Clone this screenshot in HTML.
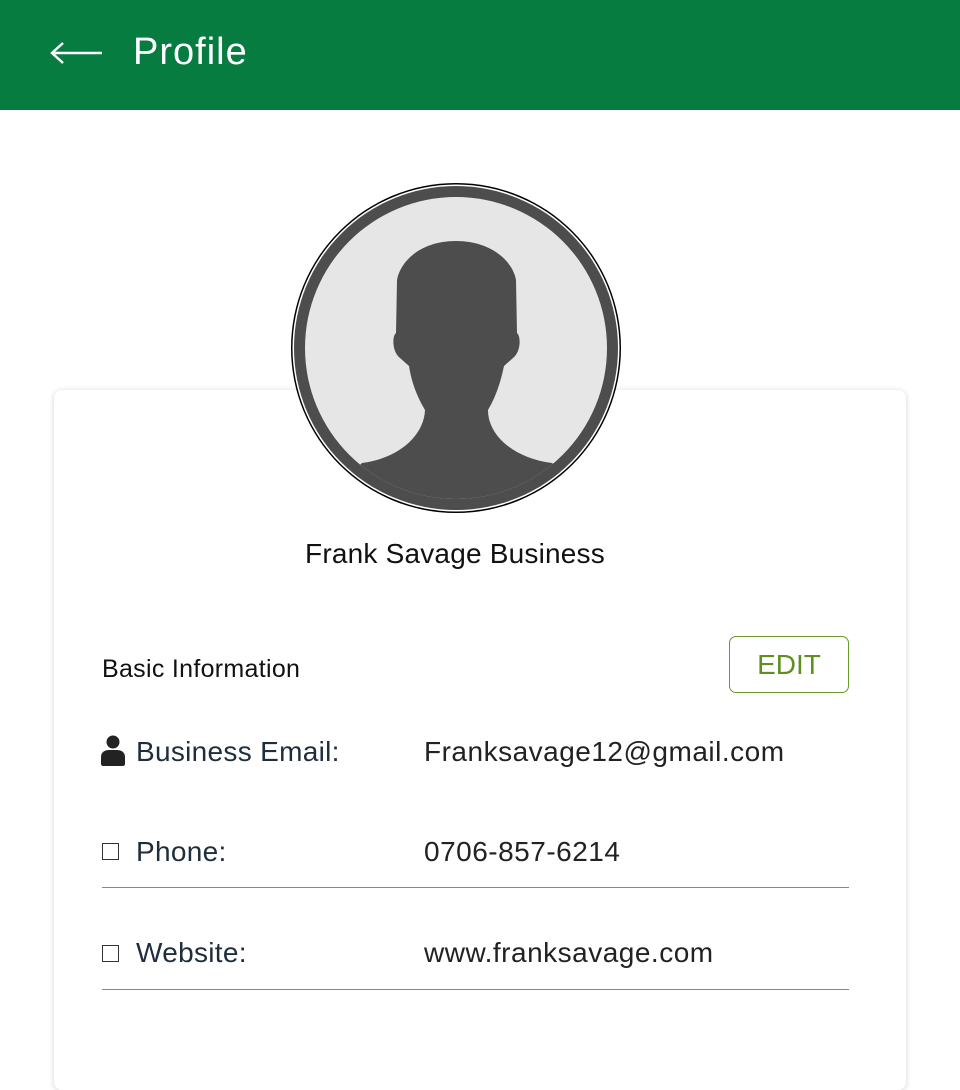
<!DOCTYPE html>
<html><head><meta charset="utf-8"><style>
*{margin:0;padding:0;box-sizing:border-box}
body{width:960px;height:1050px;overflow:hidden;background:#fff;font-family:"Liberation Sans",sans-serif;position:relative}
.hdr{position:absolute;left:0;top:0;width:960px;height:110px;background:#067c41}
.hdr .t{position:absolute;left:133px;top:31px;color:#fff;font-size:38px;letter-spacing:1px}
.card{position:absolute;left:54px;top:390px;width:852px;height:700px;background:#fff;border-radius:8px;box-shadow:0 1px 6px rgba(0,0,0,.18)}
.abs{position:absolute}
.name{left:0;width:910px;text-align:center;top:538px;font-size:28px;color:#111;letter-spacing:.2px}
.lbl{font-size:28px;color:#1f2d3d;letter-spacing:.3px}
.val{font-size:28px;color:#222;left:424px;letter-spacing:.5px}
.line{left:102px;width:747px;height:1px;background:#888}
.box{width:17px;height:17px;border:1.5px solid #333}
</style></head><body>
<div class="hdr">
<svg class="abs" style="left:48px;top:40px" width="58" height="26" viewBox="0 0 58 26"><path d="M54 13H4M15 3L4 13L15 23" stroke="#fff" stroke-width="2.5" fill="none"/></svg>
<div class="t">Profile</div>
</div>
<div class="card"></div>
<svg class="abs" style="left:289px;top:181px" width="334" height="334" viewBox="289 181 334 334">
<defs><clipPath id="c"><circle cx="456" cy="348" r="151"/></clipPath></defs>
<circle cx="456" cy="348" r="165" fill="#000"/>
<circle cx="456" cy="348" r="163.5" fill="#fff"/>
<circle cx="456" cy="348" r="162" fill="#4d4d4d"/>
<circle cx="456" cy="348" r="151" fill="#e6e6e6"/>
<path clip-path="url(#c)" fill="#4d4d4d" d="M456 241C420 241 400 262 397 280L396 333C392 336 392 352 400 358L409 366C412 385 418 398 425 410C424 435 400 458 362 463L300 520L620 520L552 463C513 458 488 435 488 410C495 398 500 385 504 366L513 358C521 352 521 336 517 333L516 280C513 262 492 241 456 241Z"/>
</svg>
<div class="abs name">Frank Savage Business</div>
<div class="abs" style="left:102px;top:655px;font-size:25px;color:#111;letter-spacing:.3px">Basic Information</div>
<div class="abs" style="left:729px;top:636px;width:120px;height:57px;border:1px solid #6a9a2a;border-radius:7px;color:#5f8f1f;font-size:28px;text-align:center;line-height:56px">EDIT</div>
<svg class="abs" style="left:101px;top:735px" width="24" height="31" viewBox="0 0 24 31"><circle cx="12" cy="7" r="6.5" fill="#222"/><path d="M0 29V22C0 17 4 15 8 15H16C20 15 24 17 24 22V29C24 30 23 31 22 31H2C1 31 0 30 0 29Z" fill="#222"/></svg>
<div class="abs lbl" style="left:136px;top:736px">Business Email:</div>
<div class="abs val" style="top:736px">Franksavage12@gmail.com</div>
<div class="abs box" style="left:102px;top:843px"></div>
<div class="abs lbl" style="left:136px;top:836px">Phone:</div>
<div class="abs val" style="top:836px">0706-857-6214</div>
<div class="abs line" style="top:887px"></div>
<div class="abs box" style="left:102px;top:945px"></div>
<div class="abs lbl" style="left:136px;top:937px">Website:</div>
<div class="abs val" style="top:937px">www.franksavage.com</div>
<div class="abs line" style="top:989px"></div>
</body></html>
